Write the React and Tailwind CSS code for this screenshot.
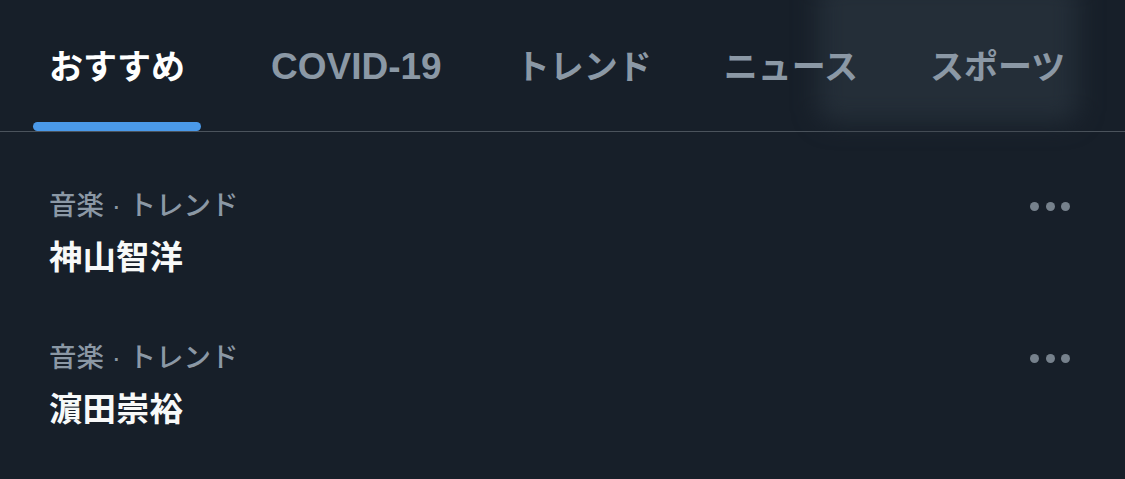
import React from 'react';

const tabs = [
    { label: 'おすすめ', active: true, ml: 'ml-[33px]', size: 'text-[34px]' },
    { label: 'COVID-19', ml: 'ml-[54px]', size: 'text-[37px]' },
    { label: 'トレンド', ml: 'ml-[42px]', size: 'text-[34px]' },
    { label: 'ニュース', ml: 'ml-[40px]', size: 'text-[34px]' },
    { label: 'スポーツ', ml: 'ml-[40px]', size: 'text-[34px]' },
];

const trends = [
    { category: '音楽 · トレンド', title: '神山智洋' },
    { category: '音楽 · トレンド', title: '濵田崇裕' },
];

const font = { fontFamily: '"Liberation Sans", "Noto Sans CJK JP", sans-serif' };

const MoreDots = () => (
    <div className="flex items-center gap-[6.5px]">
        <span className="w-[9px] h-[9px] rounded-full bg-[#76818c]"></span>
        <span className="w-[9px] h-[9px] rounded-full bg-[#76818c]"></span>
        <span className="w-[9px] h-[9px] rounded-full bg-[#76818c]"></span>
    </div>
);

export default function App() {
    return (
        <div className="w-[1125px] h-[479px] overflow-hidden bg-[#171f29]" style={font}>
            {/* Tab bar */}
            <div className="relative h-[132px] border-b border-[#4b535c]">
                {/* blurred backdrop behind the right tabs */}
                <div className="absolute left-[818px] top-[-20px] w-[260px] h-[142px] rounded-2xl bg-[#242e38] blur-md"></div>
                <div className="relative flex h-full">
                    {tabs.map((t) => (
                        <div key={t.label} className={`relative px-4 h-full ${t.ml}`}>
                            <div className={`pt-[47px] h-[87px] flex items-center leading-[40px] whitespace-nowrap ${t.size} ${t.active ? 'font-bold text-white' : 'font-semibold text-[#8b98a5]'}`}>
                                {t.label}
                            </div>
                            {t.active && (
                                <div className="absolute left-0 right-0 bottom-[0px] h-[9px] rounded-full bg-[#4a99e9]"></div>
                            )}
                        </div>
                    ))}
                </div>
            </div>

            {/* Trend rows */}
            {trends.map((t, i) => (
                <div key={i} className="h-[152px] pl-[49px] pr-[55px] pt-[58px]">
                    <div className="flex items-center justify-between h-[32px]">
                        <span className="text-[27.5px] leading-[32px] font-medium text-[#8b98a5]">{t.category}</span>
                        <MoreDots />
                    </div>
                    <div className="mt-[16px] text-[33.5px] leading-[40px] font-bold text-[#f7f9f9]">{t.title}</div>
                </div>
            ))}
        </div>
    );
}
